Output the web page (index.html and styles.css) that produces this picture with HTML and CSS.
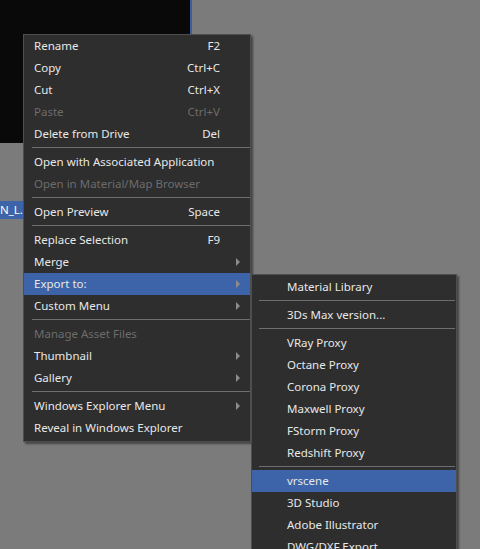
FILE: index.html
```html
<!DOCTYPE html>
<html lang="en">
<head>
    <meta charset="UTF-8">
    <title>Asset Browser Menu</title>
    <link rel="stylesheet" href="styles.css">
</head>
<body>

<div class="viewport"></div>
<div class="file-label">N_L.</div>

<div class="menu main-menu">
    <div class="item"><span>Rename</span><span class="key">F2</span></div>
    <div class="item"><span>Copy</span><span class="key">Ctrl+C</span></div>
    <div class="item"><span>Cut</span><span class="key">Ctrl+X</span></div>
    <div class="item disabled"><span>Paste</span><span class="key">Ctrl+V</span></div>
    <div class="item"><span>Delete from Drive</span><span class="key">Del</span></div>
    <div class="sep"></div>
    <div class="item"><span>Open with Associated Application</span></div>
    <div class="item disabled"><span>Open in Material/Map Browser</span></div>
    <div class="sep"></div>
    <div class="item"><span>Open Preview</span><span class="key">Space</span></div>
    <div class="sep"></div>
    <div class="item"><span>Replace Selection</span><span class="key">F9</span></div>
    <div class="item sub"><span>Merge</span></div>
    <div class="item sub selected"><span>Export to:</span></div>
    <div class="item sub"><span>Custom Menu</span></div>
    <div class="sep"></div>
    <div class="item disabled"><span>Manage Asset Files</span></div>
    <div class="item sub"><span>Thumbnail</span></div>
    <div class="item sub"><span>Gallery</span></div>
    <div class="sep"></div>
    <div class="item sub"><span>Windows Explorer Menu</span></div>
    <div class="item"><span>Reveal in Windows Explorer</span></div>
</div>

<div class="menu sub-menu">
    <div class="item"><span>Material Library</span></div>
    <div class="sep"></div>
    <div class="item"><span>3Ds Max version...</span></div>
    <div class="sep"></div>
    <div class="item"><span>VRay Proxy</span></div>
    <div class="item"><span>Octane Proxy</span></div>
    <div class="item"><span>Corona Proxy</span></div>
    <div class="item"><span>Maxwell Proxy</span></div>
    <div class="item"><span>FStorm Proxy</span></div>
    <div class="item"><span>Redshift Proxy</span></div>
    <div class="sep"></div>
    <div class="item selected"><span>vrscene</span></div>
    <div class="item"><span>3D Studio</span></div>
    <div class="item"><span>Adobe Illustrator</span></div>
    <div class="item"><span>DWG/DXF Export</span></div>
</div>

</body>
</html>
```

FILE: styles.css
```css
body {
    margin: 0;
    background-color: #7b7b7b;
    font-family: "Noto Sans", "Open Sans", sans-serif;
    font-size: 11.5px;
    color: #e8e8e8;
    overflow: hidden;
    height: 549px;
}
.viewport {
    width: 190px;
    height: 143px;
    background-color: #090909;
    border-right: 2px solid #3a5f9e;
}
.file-label {
    margin-top: 58px;
    width: 40px;
    height: 18px;
    line-height: 18px;
    background-color: #3d64a8;
    color: #ffffff;
}
.menu {
    position: absolute;
    background-color: #2e2e2e;
    border: 1px solid #4e4e4e;
    box-shadow: 2px 2px 2px rgba(0, 0, 0, 0.45);
}
.main-menu {
    left: 23px;
    top: 34px;
    width: 226px;
    padding-bottom: 2px;
}
.sub-menu {
    left: 251px;
    top: 274px;
    width: 204px;
    padding-top: 1px;
    height: 300px;
}
.item {
    box-sizing: border-box;
    display: flex;
    justify-content: space-between;
    align-items: center;
    height: 22px;
    padding: 0 30px 1px 10px;
    white-space: nowrap;
    position: relative;
}
.sub-menu .item {
    padding-left: 35px;
}
.key {
    text-align: right;
}
.disabled {
    color: #6c6c6c;
}
.selected {
    background-color: #3d64a8;
}
.sub::after {
    content: "";
    position: absolute;
    right: 10px;
    top: 7px;
    border-left: 4px solid #8c8c8c;
    border-top: 4px solid transparent;
    border-bottom: 4px solid transparent;
}
.sep {
    height: 1px;
    margin: 2px 0 3px 8px;
    background-color: #6e6e6e;
}
.sub-menu .sep {
    margin-left: 7px;
    margin-right: 1px;
}
```
